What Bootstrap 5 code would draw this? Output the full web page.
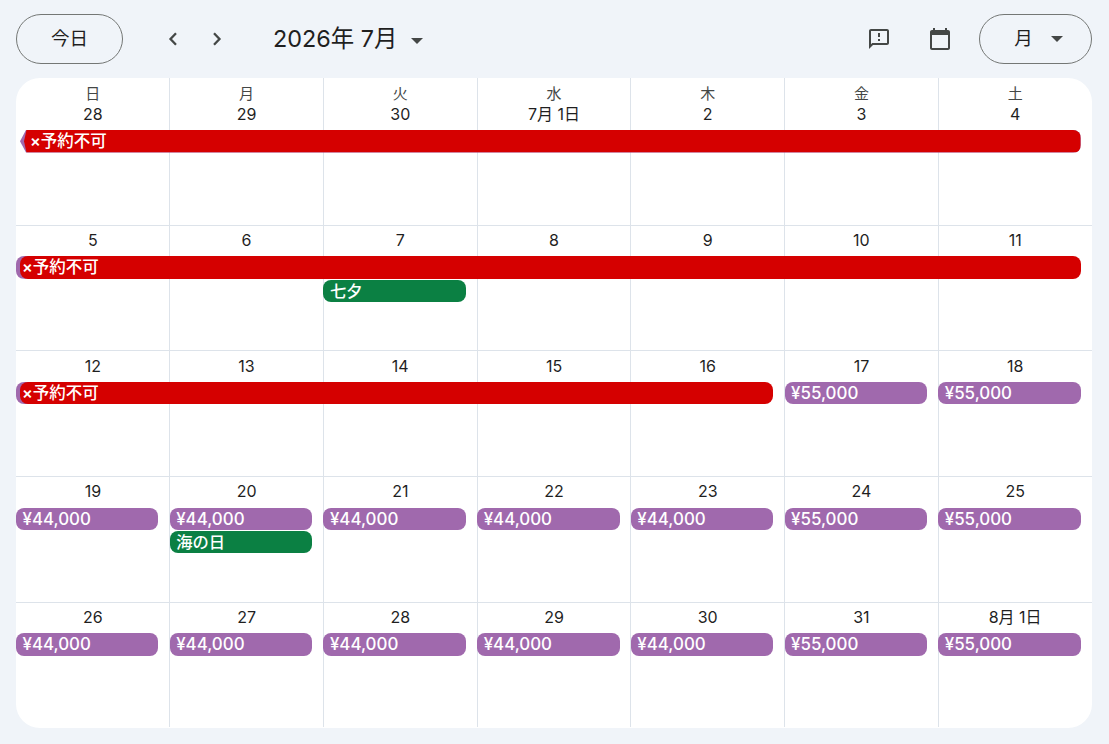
<!DOCTYPE html>
<html lang="ja">
<head>
  <meta charset="UTF-8" />
  <meta name="viewport" content="width=device-width, initial-scale=1.0"/>
  <title>カレンダー</title>
  <link href="https://cdn.jsdelivr.net/npm/bootstrap@5.3.0/dist/css/bootstrap.min.css" rel="stylesheet"/>
  <style>
    html, body { height: 100%; }
    body { background: #f0f4f9; color: #1f1f1f; font-family: Inter, "Noto Sans CJK JP", sans-serif; overflow: hidden; }
    .page-wrap { padding: 14px 17px 16px 16px; }
    .top-bar { height: 50px; margin-bottom: 14px; }
    .pill-btn { height: 50px; border: 1px solid #747775; border-radius: 25px; background: transparent; color: #1f1f1f; font-size: 18.5px; display: flex; align-items: center; justify-content: center; padding: 0; }
    .pill-today { width: 107px; }
    .pill-view { width: 113px; gap: 18px; padding-left: 6px; }
    .nav-btns { margin-left: 42px; gap: 28px; }
    .icon-plain { width: 16px; height: 24px; border: 0; background: none; padding: 0; display: flex; align-items: center; justify-content: center; }
    .month-title { margin-left: 48px; font-size: 23.4px; line-height: 30px; }
    .tri { width: 0; height: 0; border-left: 6px solid transparent; border-right: 6px solid transparent; border-top: 6px solid #444746; }
    .month-title + .tri { margin-left: 14px; margin-top: 3px; }
    .tool-icon { width: 24px; height: 24px; display: block; }
    .tool-gap { gap: 37px; margin-right: 27px; }
    .cal-sheet { background: #fff; border-radius: 24px; overflow: hidden; height: 650px; width: 1076px; }
    .week-grid { display: grid; grid-template-columns: repeat(7, 1fr); grid-template-rows: auto 22.5px 22.5px 1fr; height: 125.55px; border-top: 1px solid #dde3ea; }
    .week-first { height: 146.9px; border-top: 0; }
    .week-grid:nth-child(3) { height: 125.9px; }
    .day-bg { grid-row: 1 / -1; border-right: 1px solid #dde3ea; margin-right: -0.4px; }
    .day-bg:nth-child(7) { border-right: 0; }
    .day-head { grid-row: 1; text-align: center; font-size: 16px; line-height: 21px; padding-top: 4px; padding-bottom: 5.3px; }
    .week-grid:nth-child(3) .day-head { padding-top: 4.3px; padding-bottom: 5px; }
    .week-first .day-head { padding-top: 5px; padding-bottom: 5px; }
    .dow { display: block; font-size: 15px; color: #444746; line-height: 21px; }
    .ev { font-weight: 500; color: #fff; height: 22.5px; line-height: 22px; padding-left: 6.5px; border-radius: 8px; margin-right: 11.3px; white-space: nowrap; overflow: hidden; }
    .ev-price { font-size: 16.9px; background: #a069ad; grid-row: 2; }
    .ev-holiday { font-size: 16.3px; height: 22px; background: #0b8043; grid-row: 3; margin-top: 1.2px; }
    .ev-blocked-wrap { grid-row: 2; grid-column-start: 1; height: 22.5px; margin-right: 11.3px; border-radius: 8px; background: linear-gradient(#a069ad, #a069ad) no-repeat left / 12px 100%; }
    .ev-blocked { background: #d50000; height: 22.5px; margin-left: 4px; border-radius: 8px; font-size: 16.5px; font-weight: 500; color: #fff; line-height: 22px; padding-left: 2px; white-space: nowrap; }
    .ev-x { font-size: 16px; font-weight: 600; }
    /* 前の週から続く予定は左端が矢印 */
    .wrap-cont { margin-left: 4px; border-radius: 0 8px 8px 0; background: #a069ad; clip-path: polygon(6px 0, 100% 0, 100% 100%, 6px 100%, 0 50%); }
    .wrap-cont .ev-blocked { margin-left: 0; padding-left: 10px; border-radius: 0 8px 8px 0; clip-path: polygon(6.5px 0, 100% 0, 100% 100%, 6.5px 100%, 4px 50%); }
  </style>
</head>
<body>
  <div class="page-wrap">
    <!-- Toolbar -->
    <div class="top-bar d-flex align-items-center">
      <button class="pill-btn pill-today" type="button">今日</button>
      <div class="nav-btns d-flex">
        <button class="icon-plain" type="button" aria-label="前"><svg width="10" height="14" viewBox="0 0 10 14"><path d="M8 1.200 2.500 7 8 12.800" fill="none" stroke="#444746" stroke-width="2.300"/></svg></button>
        <button class="icon-plain" type="button" aria-label="次"><svg width="10" height="14" viewBox="0 0 10 14"><path d="M2 1.200 7.500 7 2 12.800" fill="none" stroke="#444746" stroke-width="2.300"/></svg></button>
      </div>
      <div class="month-title">2026年 7月</div>
      <div class="tri"></div>
      <div class="ms-auto d-flex align-items-center">
        <div class="tool-gap d-flex">
          <svg class="tool-icon" viewBox="0 0 24 24"><path fill="#444746" d="M20 2H4c-1.100 0-2 .9-2 2v18l4-4h14c1.100 0 2-.9 2-2V4c0-1.100-.9-2-2-2zm0 14H5.200L4 17.200V4h16v12zM11 12h2v2h-2zm0-6h2v4h-2z"/></svg>
          <svg class="tool-icon" viewBox="0 0 24 24"><path fill="#444746" d="M20 3h-1V1h-2v2H7V1H5v2H4c-1.100 0-2 .9-2 2v16c0 1.100.9 2 2 2h16c1.100 0 2-.9 2-2V5c0-1.100-.9-2-2-2zm0 18H4V8h16v13z"/></svg>
        </div>
        <button class="pill-btn pill-view" type="button">月<span class="tri"></span></button>
      </div>
    </div>

    <!-- Month sheet -->
    <div class="cal-sheet" id="sheet"></div>
  </div>

  <script>
    const dows = ["日","月","火","水","木","金","土"];
    const weeks = [
      { days: ["28","29","30","7月 1日","2","3","4"], blocked: { span: 7, first: true } },
      { days: ["5","6","7","8","9","10","11"], blocked: { span: 7 }, holidays: [[2, "七夕"]] },
      { days: ["12","13","14","15","16","17","18"], blocked: { span: 5 }, prices: ["","","","","","¥55,000","¥55,000"] },
      { days: ["19","20","21","22","23","24","25"], holidays: [[1, "海の日"]], prices: ["¥44,000","¥44,000","¥44,000","¥44,000","¥44,000","¥55,000","¥55,000"] },
      { days: ["26","27","28","29","30","31","8月 1日"], prices: ["¥44,000","¥44,000","¥44,000","¥44,000","¥44,000","¥55,000","¥55,000"] }
    ];
    let html = "";
    weeks.forEach(function (w, wi) {
      html += '<div class="week-grid' + (wi === 0 ? ' week-first' : '') + '">';
      for (let i = 0; i < 7; i++) html += '<div class="day-bg" style="grid-column:' + (i + 1) + '"></div>';
      w.days.forEach(function (d, i) {
        html += '<div class="day-head" style="grid-column:' + (i + 1) + '">' + (wi === 0 ? '<span class="dow">' + dows[i] + '</span>' : '') + d + '</div>';
      });
      if (w.blocked) {
        html += '<div class="ev-blocked-wrap' + (w.blocked.first ? ' wrap-cont' : '') + '" style="grid-column-end:span ' + w.blocked.span + '">' +
          '<div class="ev-blocked"><span class="ev-x">×</span>予約不可</div></div>';
      }
      (w.prices || []).forEach(function (p, i) {
        if (p) html += '<div class="ev ev-price" style="grid-column:' + (i + 1) + '">' + p + '</div>';
      });
      (w.holidays || []).forEach(function (h) {
        html += '<div class="ev ev-holiday" style="grid-column:' + (h[0] + 1) + '">' + h[1] + '</div>';
      });
      html += '</div>';
    });
    document.getElementById("sheet").innerHTML = html;
  </script>
  <script src="https://cdn.jsdelivr.net/npm/bootstrap@5.3.0/dist/js/bootstrap.bundle.min.js"></script>
</body>
</html>
